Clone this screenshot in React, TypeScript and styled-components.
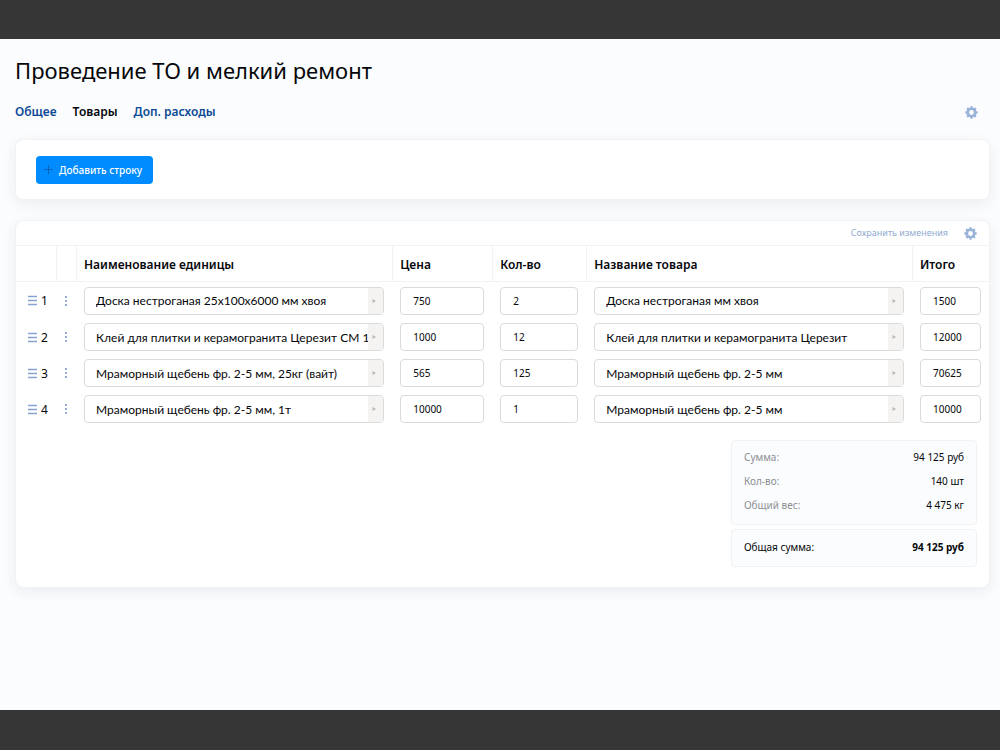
import React, { useState } from 'react';
import styled, { createGlobalStyle } from 'styled-components';

const GlobalStyle = createGlobalStyle`
  *, *::before, *::after { box-sizing: border-box; }
  html, body { margin: 0; }
  body {
    background: #fbfcfe;
    color: #050609;
    font-family: "Noto Sans", "Open Sans", sans-serif;
    font-size: 12px;
  }
  button, input { font: inherit; color: inherit; }
`;

const Page = styled.div`
  min-height: 100vh;
  display: flex;
  flex-direction: column;
`;

const Band = styled.div<{ $size: number }>`
  flex: none;
  height: ${(p) => p.$size}px;
  background: #363636;
`;

const Content = styled.main`
  flex: 1;
  padding: 15px 10px 24px 15px;
`;

const Title = styled.h1`
  margin: 0;
  font-size: 22px;
  line-height: 32px;
  font-weight: 400;
`;

const TabBar = styled.div`
  display: flex;
  align-items: center;
  justify-content: space-between;
  margin-top: 17px;
  padding-right: 12px;
  height: 18px;
`;

const Tabs = styled.nav`
  display: flex;
  gap: 16px;
`;

const Tab = styled.a<{ $active?: boolean }>`
  font-weight: 600;
  line-height: 18px;
  color: ${(p) => (p.$active ? '#050609' : '#0b4a94')};
  text-decoration: none;
`;

const IconButton = styled.button`
  display: flex;
  padding: 0;
  border: 0;
  background: none;
  cursor: pointer;
`;

const Card = styled.section`
  background: #fff;
  border: 1px solid #f1f2f4;
  border-radius: 8px;
  box-shadow: 0 4px 14px rgba(30, 40, 60, 0.07);
`;

const ActionCard = styled(Card)`
  margin-top: 18px;
  padding: 16px 20px 15px;
`;

const AddButton = styled.button`
  display: flex;
  align-items: center;
  gap: 5px;
  height: 28px;
  padding: 0 11px 0 8px;
  border: 0;
  border-radius: 4px;
  background: #008cff;
  color: #fff;
  font-size: 10px;
  font-weight: 500;
  cursor: pointer;
`;

const TableCard = styled(Card)`
  margin-top: 20px;
  padding-bottom: 20px;
`;

const CardHead = styled.div`
  display: flex;
  align-items: center;
  justify-content: flex-end;
  gap: 16px;
  height: 24px;
  padding-right: 12px;
`;

const SaveButton = styled.button`
  padding: 0;
  border: 0;
  background: none;
  color: #8fabd3;
  font-size: 9px;
  line-height: 16px;
  cursor: pointer;
`;

const Table = styled.table`
  width: 100%;
  table-layout: fixed;
  border-collapse: separate;
  border-spacing: 0;
`;

const Col = styled.col<{ $width?: string }>`
  width: ${(p) => p.$width ?? 'auto'};
`;

const HeadCell = styled.th`
  height: 37px;
  padding: 2px 7px 0;
  border-top: 1px solid #f1f2f4;
  border-bottom: 1px solid #f1f2f4;
  text-align: left;
  font-weight: 600;
  white-space: nowrap;
  & + & { border-left: 1px solid #f1f2f4; }
`;

const Cell = styled.td`
  height: 36px;
  padding: 4px 8px;
  tr:first-child > & { height: 37px; }
`;

const HandleCell = styled(Cell)`
  padding: 4px 0 4px 12px;
`;

const Handle = styled.div`
  display: flex;
  align-items: center;
  gap: 4px;
`;

const MenuCell = styled(Cell)`
  padding: 4px 0 4px 8px;
`;

const Field = styled.input`
  display: block;
  width: 100%;
  height: 28px;
  padding: 0 12px;
  border: 1px solid #d9dadc;
  border-radius: 4px;
  background: #fff;
  font-size: 10px;
`;

const Combo = styled.div`
  display: flex;
  height: 28px;
  border: 1px solid #d9dadc;
  border-radius: 4px;
  overflow: hidden;
  background: #fff;
`;

const ComboInput = styled.input`
  flex: 1;
  min-width: 0;
  padding: 0 0 0 11px;
  border: 0;
  background: none;
  font-family: Lato, sans-serif;
`;

const ComboButton = styled.button`
  display: flex;
  align-items: center;
  justify-content: center;
  width: 15px;
  padding: 0 3px 0 0;
  border: 0;
  background: #f4f3f1;
  cursor: pointer;
`;

const Totals = styled.div`
  display: flex;
  flex-direction: column;
  gap: 4px;
  width: 246px;
  margin: 13px 12px 0 auto;
`;

const TotalsBox = styled.dl<{ $strong?: boolean }>`
  margin: 0;
  padding: ${(p) => (p.$strong ? '5px 12px 7px' : '4px 12px 7px')};
  border: 1px solid #f1f2f4;
  border-radius: 4px;
  background: #fbfcfe;
  font-size: 10px;
  line-height: 24px;
  dt { color: ${(p) => (p.$strong ? '#050609' : '#8d8f93')}; }
  dd { font-weight: ${(p) => (p.$strong ? 700 : 400)}; }
`;

const TotalsRow = styled.div`
  display: flex;
  justify-content: space-between;
  dd { margin: 0; }
`;

const teeth = [0, 45, 90, 135, 180, 225, 270, 315];

const Gear = () => (
  <svg width="13" height="13" viewBox="0 0 13 13" aria-hidden="true">
    <circle cx="6.5" cy="6.5" r="3.7" fill="none" stroke="#9ab3d9" strokeWidth="2.6" />
    {teeth.map((a) => (
      <rect key={a} x="5.3" y="0.3" width="2.4" height="2.2" rx="0.4" fill="#9ab3d9" transform={`rotate(${a} 6.5 6.5)`} />
    ))}
  </svg>
);

const Plus = () => (
  <svg width="10" height="10" viewBox="0 0 10 10" aria-hidden="true">
    <path d="M4.5 0v9M0 4.5h9" stroke="#0a62b5" strokeWidth="1" />
  </svg>
);

const Bars = () => (
  <svg width="9" height="11" viewBox="0 0 9 11" aria-hidden="true">
    <path d="M0 1.5h9M0 5.5h9M0 9.5h9" stroke="#86a4d3" strokeWidth="1.3" />
  </svg>
);

const Dots = () => (
  <svg width="4" height="12" viewBox="0 0 4 12" aria-hidden="true">
    <path d="M1 1h2v2H1zM1 5h2v2H1zM1 9h2v2H1z" fill="#93abd6" />
  </svg>
);

const Arrow = () => (
  <svg width="4" height="4" viewBox="0 0 4 4" aria-hidden="true">
    <path d="M0.5 0L4 2L0.5 4z" fill="#b9b9bb" />
  </svg>
);

interface ComboFieldProps {
  label: string;
  value: string;
}

const ComboField = ({ label, value }: ComboFieldProps) => {
  const [text, setText] = useState(value);
  return (
    <Combo>
      <ComboInput aria-label={label} value={text} onChange={(e) => setText(e.target.value)} />
      <ComboButton type="button" aria-label={`${label}: выбрать`}>
        <Arrow />
      </ComboButton>
    </Combo>
  );
};

const rows = [
  { unit: 'Доска нестроганая 25х100х6000 мм хвоя', price: '750', qty: '2', product: 'Доска нестроганая мм хвоя', total: '1500' },
  { unit: 'Клей для плитки и керамогранита Церезит СМ 1', price: '1000', qty: '12', product: 'Клей для плитки и керамогранита Церезит', total: '12000' },
  { unit: 'Мраморный щебень фр. 2-5 мм, 25кг (вайт)', price: '565', qty: '125', product: 'Мраморный щебень фр. 2-5 мм', total: '70625' },
  { unit: 'Мраморный щебень фр. 2-5 мм, 1т', price: '10000', qty: '1', product: 'Мраморный щебень фр. 2-5 мм', total: '10000' },
];

export default function App() {
  return (
    <Page>
      <GlobalStyle />
      <Band $size={39} />
      <Content>
        <Title>Проведение ТО и мелкий ремонт</Title>
        <TabBar>
          <Tabs>
            <Tab href="#general">Общее</Tab>
            <Tab href="#goods" $active aria-current="page">Товары</Tab>
            <Tab href="#costs">Доп. расходы</Tab>
          </Tabs>
          <IconButton type="button" aria-label="Настройки"><Gear /></IconButton>
        </TabBar>
        <ActionCard>
          <AddButton type="button"><Plus />Добавить строку</AddButton>
        </ActionCard>
        <TableCard>
          <CardHead>
            <SaveButton type="button">Сохранить изменения</SaveButton>
            <IconButton type="button" aria-label="Настройки таблицы"><Gear /></IconButton>
          </CardHead>
          <Table>
            <colgroup>
              <Col $width="40px" />
              <Col $width="20px" />
              <Col $width="32.5%" />
              <Col $width="100px" />
              <Col $width="94px" />
              <Col />
              <Col $width="77px" />
            </colgroup>
            <thead>
              <tr>
                <HeadCell aria-label="Номер" />
                <HeadCell aria-label="Меню" />
                <HeadCell>Наименование единицы</HeadCell>
                <HeadCell>Цена</HeadCell>
                <HeadCell>Кол-во</HeadCell>
                <HeadCell>Название товара</HeadCell>
                <HeadCell>Итого</HeadCell>
              </tr>
            </thead>
            <tbody>
              {rows.map((r, i) => (
                <tr key={i}>
                  <HandleCell><Handle><Bars />{i + 1}</Handle></HandleCell>
                  <MenuCell><IconButton type="button" aria-label="Меню строки"><Dots /></IconButton></MenuCell>
                  <Cell><ComboField label="Наименование единицы" value={r.unit} /></Cell>
                  <Cell><Field aria-label="Цена" defaultValue={r.price} /></Cell>
                  <Cell><Field aria-label="Кол-во" defaultValue={r.qty} /></Cell>
                  <Cell><ComboField label="Название товара" value={r.product} /></Cell>
                  <Cell><Field aria-label="Итого" defaultValue={r.total} /></Cell>
                </tr>
              ))}
            </tbody>
          </Table>
          <Totals>
            <TotalsBox>
              <TotalsRow><dt>Сумма:</dt><dd>94 125 руб</dd></TotalsRow>
              <TotalsRow><dt>Кол-во:</dt><dd>140 шт</dd></TotalsRow>
              <TotalsRow><dt>Общий вес:</dt><dd>4 475 кг</dd></TotalsRow>
            </TotalsBox>
            <TotalsBox $strong>
              <TotalsRow><dt>Общая сумма:</dt><dd>94 125 руб</dd></TotalsRow>
            </TotalsBox>
          </Totals>
        </TableCard>
      </Content>
      <Band $size={40} />
    </Page>
  );
}
